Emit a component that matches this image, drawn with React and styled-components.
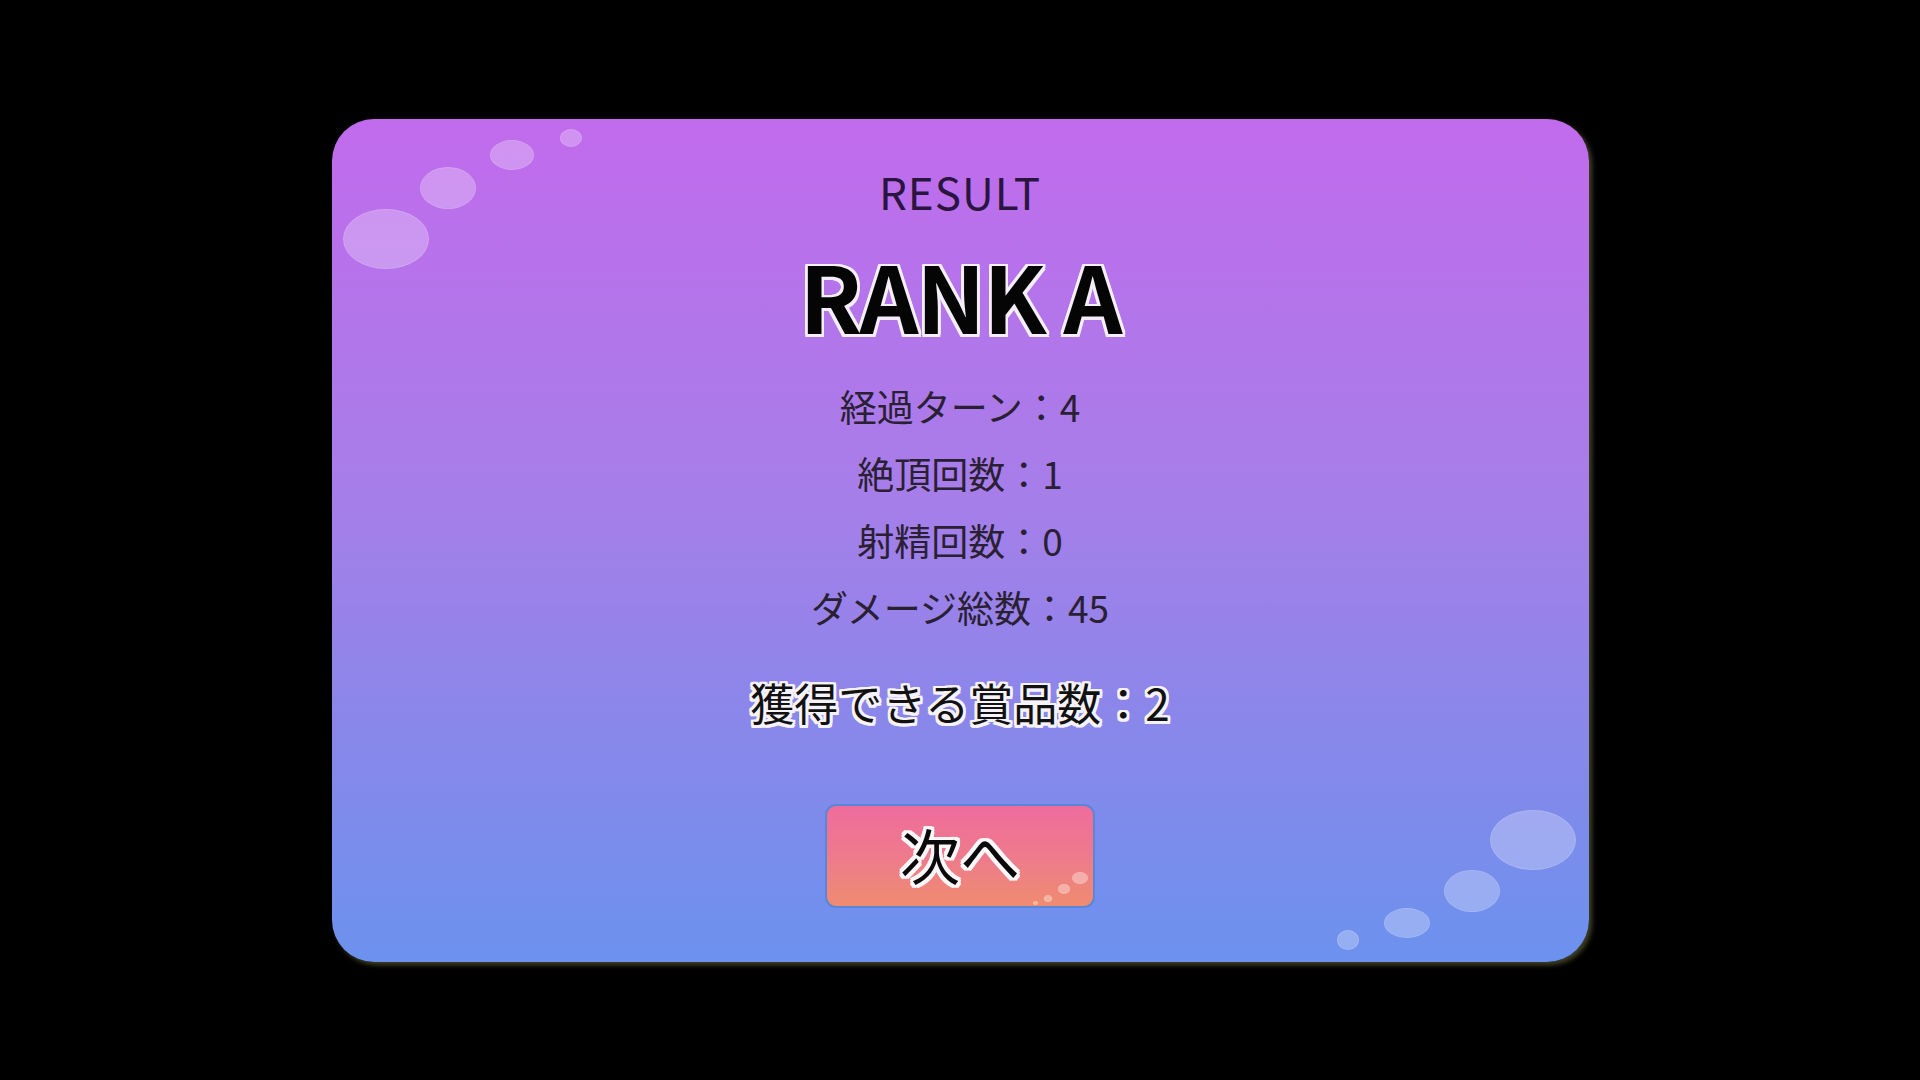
import styled, { createGlobalStyle } from 'styled-components';

const GlobalStyle = createGlobalStyle`
  html, body {
    margin: 0;
    padding: 0;
    background: #000;
  }
  #root {
    height: 100vh;
  }
`;

const Screen = styled.div`
  width: 1920px;
  height: 1080px;
  display: flex;
  align-items: center;
  justify-content: center;
  background: #000;
  font-family: "Noto Sans CJK JP", "Noto Sans", sans-serif;
`;

const Card = styled.div`
  position: relative;
  width: 1257px;
  height: 843px;
  box-sizing: border-box;
  padding-top: 42px;
  border-radius: 42px;
  background: linear-gradient(180deg, #c16bec 0%, #a67ee9 45%, #8688ea 75%, #6c92ee 100%);
  box-shadow: 3px 3px 5px rgba(120, 120, 70, 0.55);
  display: flex;
  flex-direction: column;
  align-items: center;
  overflow: hidden;
`;

const Bubble = styled.span`
  position: absolute;
  width: ${p => p.w}px;
  height: ${p => p.h}px;
  border-radius: 50%;
  background: rgba(255, 255, 255, ${p => p.alpha || 0.27});
  box-shadow: inset 0 0 0 1px rgba(255, 255, 255, 0.12);
  ${p => p.top !== undefined && `top: ${p.top}px;`}
  ${p => p.left !== undefined && `left: ${p.left}px;`}
  ${p => p.right !== undefined && `right: ${p.right}px;`}
  ${p => p.bottom !== undefined && `bottom: ${p.bottom}px;`}
`;

const Title = styled.div`
  font-size: 44px;
  line-height: 60px;
  color: #2a1540;
  letter-spacing: 1px;
`;

const outline = (w, c) => `
  text-shadow:
    ${w}px 0 0 ${c}, -${w}px 0 0 ${c}, 0 ${w}px 0 ${c}, 0 -${w}px 0 ${c},
    ${w}px ${w}px 0 ${c}, -${w}px ${w}px 0 ${c}, ${w}px -${w}px 0 ${c}, -${w}px -${w}px 0 ${c},
    ${w * 0.5}px ${w}px 0 ${c}, -${w * 0.5}px ${w}px 0 ${c}, ${w * 0.5}px -${w}px 0 ${c}, -${w * 0.5}px -${w}px 0 ${c},
    ${w}px ${w * 0.5}px 0 ${c}, -${w}px ${w * 0.5}px 0 ${c}, ${w}px -${w * 0.5}px 0 ${c}, -${w}px -${w * 0.5}px 0 ${c};
`;

const Rank = styled.div`
  margin-top: 13px;
  font-size: 92px;
  line-height: 120px;
  font-weight: 700;
  color: #050505;
  letter-spacing: -2px;
  ${outline(2.5, '#f4eef8')}
`;

const Stats = styled.div`
  margin-top: 19px;
  display: flex;
  flex-direction: column;
  align-items: center;
`;

const StatLine = styled.div`
  font-size: 37px;
  line-height: 67px;
  color: #2a2034;
`;

const Prize = styled.div`
  margin-top: 31px;
  font-size: 44px;
  line-height: 60px;
  color: #111;
  ${outline(2.5, '#f6f2fa')}
`;

const NextButton = styled.button`
  position: relative;
  margin-top: 72px;
  width: 270px;
  height: 104px;
  border: 2px solid #5a86d8;
  border-radius: 11px;
  background: linear-gradient(180deg, #ee6c9c 0%, #ee7c8a 55%, #ef8c70 100%);
  font-family: inherit;
  font-size: 60px;
  line-height: 1;
  color: #0a0a0a;
  cursor: pointer;
  overflow: hidden;
  display: flex;
  align-items: center;
  justify-content: center;
  padding: 0 0 4px;
  ${outline(3, '#fbf6f8')}
`;

const stats = [
  ['経過ターン', 4],
  ['絶頂回数', 1],
  ['射精回数', 0],
  ['ダメージ総数', 45],
];

export default function App() {
  return (
    <>
      <GlobalStyle />
      <Screen>
        <Card>
          <Bubble w={86} h={60} left={11} top={90} />
          <Bubble w={56} h={42} left={88} top={48} />
          <Bubble w={44} h={30} left={158} top={21} />
          <Bubble w={22} h={18} left={228} top={10} />

          <Bubble w={86} h={60} right={13} bottom={92} />
          <Bubble w={56} h={42} right={89} bottom={50} />
          <Bubble w={46} h={30} right={159} bottom={24} />
          <Bubble w={22} h={20} right={230} bottom={12} />

          <Title>RESULT</Title>
          <Rank>RANK A</Rank>
          <Stats>
            {stats.map(([label, value]) => (
              <StatLine key={label}>{label}：{value}</StatLine>
            ))}
          </Stats>
          <Prize>獲得できる賞品数：2</Prize>
          <NextButton>
            次へ
            <Bubble w={16} h={12} right={5} bottom={22} alpha={0.35} />
            <Bubble w={12} h={10} right={23} bottom={12} alpha={0.35} />
            <Bubble w={8} h={7} right={41} bottom={4} alpha={0.35} />
            <Bubble w={5} h={4} right={55} bottom={1} alpha={0.35} />
          </NextButton>
        </Card>
      </Screen>
    </>
  );
}
